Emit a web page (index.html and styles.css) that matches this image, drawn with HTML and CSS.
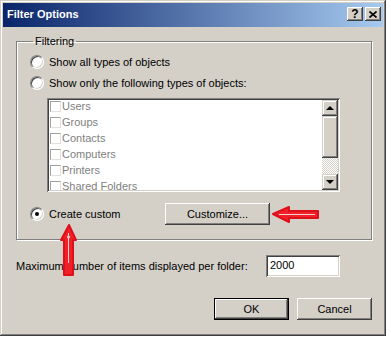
FILE: index.html
```html
<!DOCTYPE html>
<html lang="en">
<head>
    <meta charset="UTF-8">
    <title>Filter Options</title>
    <link rel="stylesheet" href="styles.css">
</head>
<body>
<div class="dialog">
    <div class="titlebar">
        <span class="title">Filter Options</span>
        <div class="caption_btns">
            <span class="cap_btn help">?</span>
            <span class="cap_btn close">
                <svg width="8" height="7" viewBox="0 0 8 7">
                    <path d="M0.5 0.5 L7.5 6.5 M7.5 0.5 L0.5 6.5" stroke="#000" stroke-width="1.6" fill="none"/>
                </svg>
            </span>
        </div>
    </div>
    <div class="content">
        <fieldset class="group">
            <legend>Filtering</legend>
            <div class="opt">
                <span class="radio"></span>
                <span>Show all types of objects</span>
            </div>
            <div class="opt">
                <span class="radio"></span>
                <span>Show only the following types of objects:</span>
            </div>
            <div class="listbox">
                <ul class="items">
                    <li><span class="check"></span>Users</li>
                    <li><span class="check"></span>Groups</li>
                    <li><span class="check"></span>Contacts</li>
                    <li><span class="check"></span>Computers</li>
                    <li><span class="check"></span>Printers</li>
                    <li><span class="check"></span>Shared Folders</li>
                </ul>
                <div class="scrollbar">
                    <span class="sb_btn"><i class="tri up"></i></span>
                    <span class="sb_thumb"></span>
                    <span class="sb_track"></span>
                    <span class="sb_btn"><i class="tri down"></i></span>
                </div>
            </div>
            <div class="opt custom">
                <span class="radio checked"></span>
                <span class="custom_label">Create custom</span>
                <button class="btn customize">Customize...</button>
            </div>
        </fieldset>
        <div class="max_row">
            <span class="max_label">Maximum number of items displayed per folder:</span>
            <span class="field">2000</span>
        </div>
        <div class="actions">
            <button class="btn default">OK</button>
            <button class="btn">Cancel</button>
        </div>
    </div>

    <!-- red annotation arrows -->
    <svg class="arrow arrow_left" width="50" height="20" viewBox="0 0 50 20">
        <path d="M2 9 L18 2 L18 6 L47 6 L47 13 L18 13 L18 17 Z" fill="#f02028" stroke="#e0101a" stroke-width="2" stroke-linejoin="round"/>
        <path d="M8 9.5 L44 9.5" stroke="#f8d0d0" stroke-width="1"/>
    </svg>
    <svg class="arrow arrow_up" width="20" height="54" viewBox="0 0 20 54">
        <path d="M10 2 L17 17 L14 17 L14 52 L5 52 L5 17 L2 17 Z" fill="#f02028" stroke="#e0101a" stroke-width="2" stroke-linejoin="round"/>
        <path d="M9.5 10 L9.5 40" stroke="#f8d0d0" stroke-width="1"/>
        <circle cx="9.5" cy="14" r="1.5" fill="#f8d0d0"/>
    </svg>
</div>
</body>
</html>
```

FILE: styles.css
```css
body {
    margin: 0;
    background: #fff;
    font-family: "Liberation Sans", Arial, sans-serif;
    font-size: 11px;
    color: #000;
}

.dialog {
    position: relative;
    width: 386px;
    height: 336px;
    box-sizing: border-box;
    padding: 3px;
    background: #d4d0c8;
    box-shadow: inset -1px -1px #404040, inset 1px 1px #d4d0c8, inset -2px -2px #808080, inset 2px 2px #fff;
}

.titlebar {
    height: 24px;
    display: flex;
    align-items: center;
    justify-content: space-between;
    padding: 0 2px 0 4px;
    background: linear-gradient(to right, #0a246a, #a6caf0);
    color: #fff;
}

.title {
    font-weight: bold;
    padding-bottom: 2px;
}

.caption_btns {
    display: flex;
    gap: 2px;
    padding-bottom: 2px;
}

.cap_btn {
    width: 16px;
    height: 14px;
    box-sizing: border-box;
    display: flex;
    align-items: center;
    justify-content: center;
    background: #d4d0c8;
    color: #000;
    box-shadow: inset -1px -1px #404040, inset 1px 1px #fff, inset -2px -2px #808080;
}

.help {
    font-weight: bold;
    font-size: 12px;
}

.content {
    padding: 0 11px 0 13px;
}

.group {
    margin: 7px 0 0;
    padding: 3px 0 14px 13px;
    border: 1px solid #808080;
    box-shadow: inset 1px 1px #fff, 1px 1px #fff;
}

.group legend {
    margin-left: 3px;
    padding: 0 2px;
    line-height: 14px;
}

.opt {
    height: 21px;
    display: flex;
    align-items: center;
    gap: 5px;
}

.radio {
    width: 12px;
    height: 12px;
    border-radius: 50%;
    background: #fff;
    border: 1px solid;
    border-color: #808080 #fff #fff #808080;
    box-shadow: inset 1px 1px #404040, inset -1px -1px #d4d0c8;
    display: flex;
    align-items: center;
    justify-content: center;
}

.radio.checked::after {
    content: "";
    width: 4px;
    height: 4px;
    border-radius: 50%;
    background: #000;
}

.listbox {
    margin: 5px 0 0 17px;
    width: 293px;
    height: 94px;
    box-sizing: border-box;
    display: flex;
    padding: 2px;
    background: #fff;
    box-shadow: inset 1px 1px #808080, inset -1px -1px #fff, inset 2px 2px #404040, inset -2px -2px #d4d0c8;
}

.items {
    flex: 1;
    margin: 0;
    padding: 0 0 0 1px;
    list-style: none;
    overflow: hidden;
    color: #808080;
}

.items li {
    height: 16px;
    display: flex;
    align-items: center;
    gap: 1px;
}

.items li:first-child {
    margin-top: -2px;
}

.check {
    width: 11px;
    height: 11px;
    box-sizing: border-box;
    border: 1px solid;
    border-color: #a0a0a0 #e0e0e0 #e0e0e0 #a0a0a0;
    background: #fff;
}

.scrollbar {
    width: 16px;
    display: flex;
    flex-direction: column;
}

.sb_btn,
.sb_thumb {
    background: #d4d0c8;
    box-shadow: inset -1px -1px #404040, inset 1px 1px #d4d0c8, inset -2px -2px #808080, inset 2px 2px #fff;
}

.sb_btn {
    height: 16px;
    display: flex;
    align-items: center;
    justify-content: center;
}

.sb_thumb {
    height: 42px;
}

.sb_track {
    flex: 1;
    background: repeating-conic-gradient(#fff 0 25%, #d4d0c8 0 50%) 0 0 / 2px 2px;
}

.tri {
    width: 0;
    height: 0;
    border-left: 4px solid transparent;
    border-right: 4px solid transparent;
}

.tri.up {
    border-bottom: 4px solid #000;
}

.tri.down {
    border-top: 4px solid #000;
}

.custom {
    height: 22px;
    margin-top: 11px;
}

.custom_label {
    width: 111px;
}

.btn {
    height: 22px;
    width: 75px;
    padding: 0;
    border: none;
    background: #d4d0c8;
    font-family: inherit;
    font-size: 11px;
    color: #000;
    box-shadow: inset -1px -1px #404040, inset 1px 1px #fff, inset -2px -2px #808080;
}

.customize {
    width: 105px;
}

.btn.default {
    box-shadow: inset 0 0 0 1px #000, inset -2px -2px #404040, inset 2px 2px #fff, inset -3px -3px #808080;
}

.max_row {
    display: flex;
    align-items: center;
    margin-top: 15px;
}

.max_label {
    width: 250px;
}

.field {
    width: 74px;
    height: 22px;
    box-sizing: border-box;
    padding: 4px 4px 0;
    background: #fff;
    box-shadow: inset 1px 1px #808080, inset -1px -1px #fff, inset 2px 2px #404040, inset -2px -2px #d4d0c8;
}

.actions {
    display: flex;
    justify-content: flex-end;
    gap: 8px;
    margin-top: 21px;
}

.arrow {
    position: absolute;
}

.arrow_left {
    left: 271px;
    top: 205px;
}

.arrow_up {
    left: 59px;
    top: 223px;
}
```
